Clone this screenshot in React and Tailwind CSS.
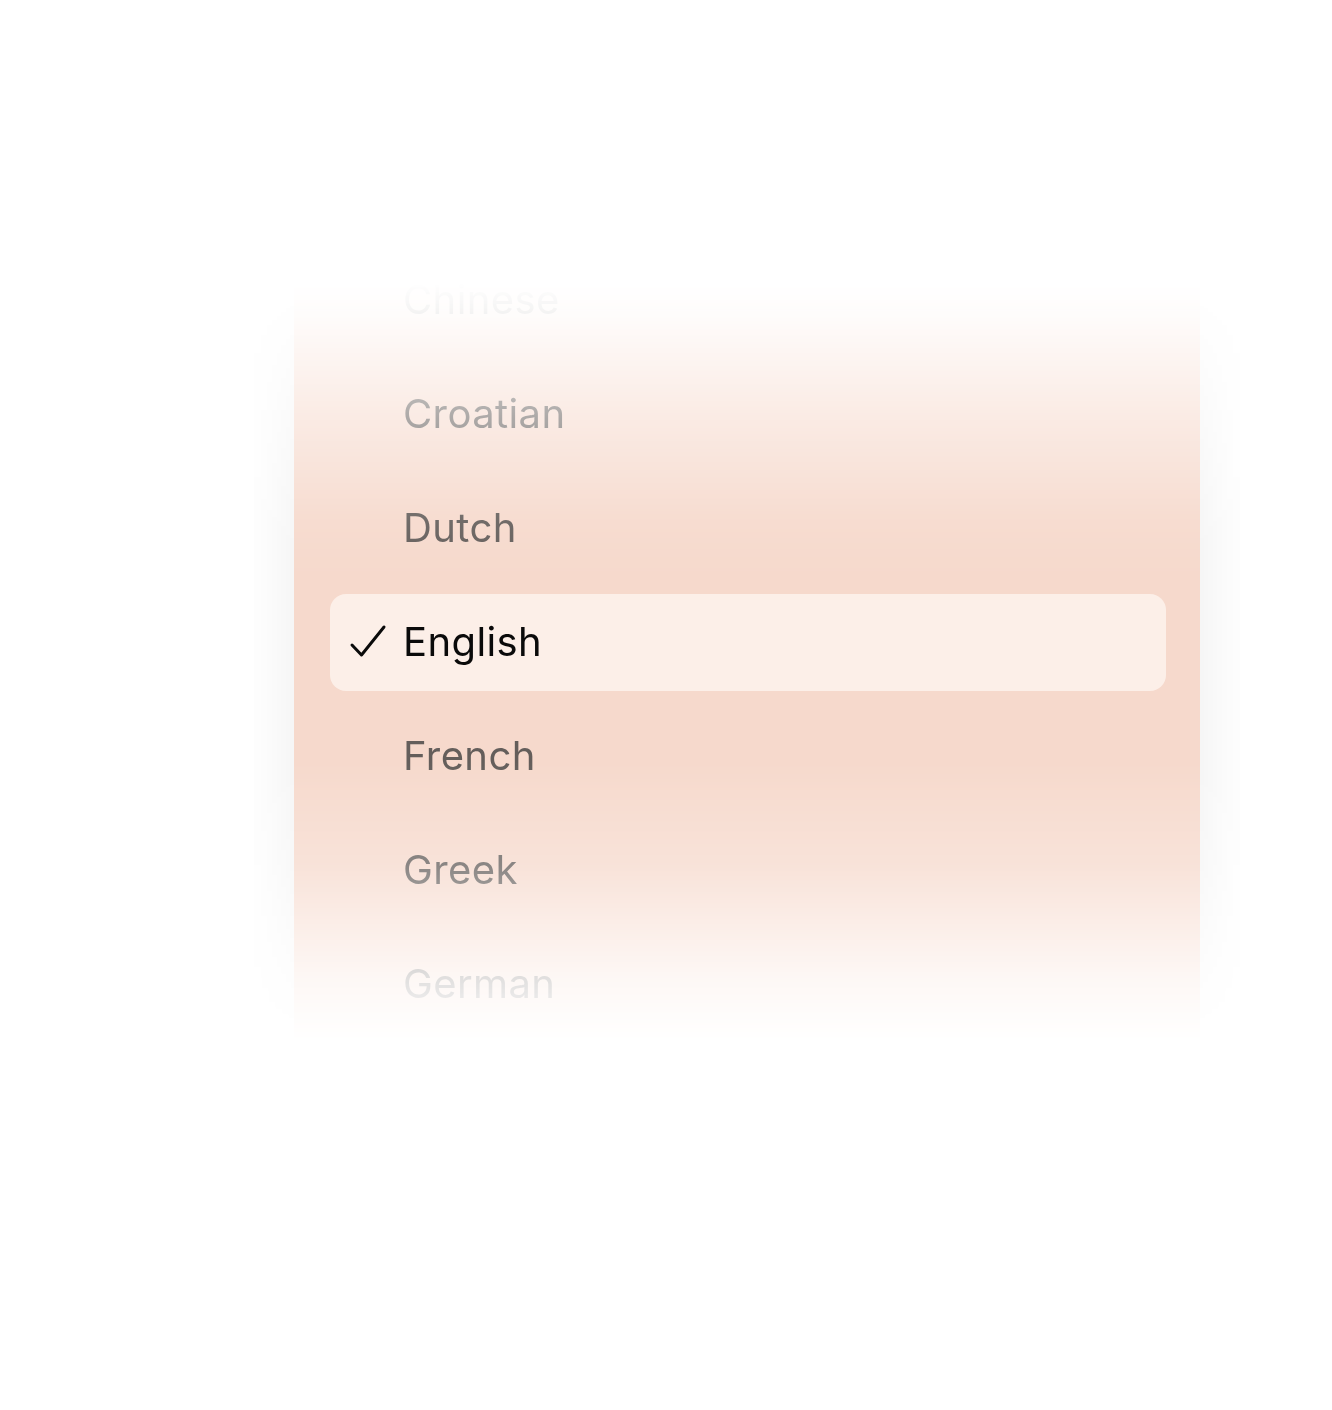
import React from 'react';

const languages = ['Chinese', 'Croatian', 'Dutch', 'English', 'French', 'Greek', 'German'];
const selected = 'English';

function Check() {
  return (
    <svg width="40" height="40" viewBox="0 0 40 40" fill="none" className="shrink-0">
      <path d="M4 23L13.5 33L36 5" stroke="#0a0a0a" strokeWidth="3" strokeLinecap="round" strokeLinejoin="round" />
    </svg>
  );
}

function LanguageRow({ name }) {
  const isSelected = name === selected;
  return (
    <li className="h-[114px] flex items-center">
      {isSelected ? (
        <div className="w-full h-[97px] rounded-2xl bg-[#fcefe8] flex items-center pl-[18px] gap-[15px]">
          <Check />
          <span className="text-[40px] leading-none text-[#0a0a0a] tracking-[0.01em]">{name}</span>
        </div>
      ) : (
        <span className="pl-[73px] text-[40px] leading-none text-[#645e5b] tracking-[0.01em]">{name}</span>
      )}
    </li>
  );
}

export default function App() {
  return (
    <div className="w-[1332px] h-[1410px] bg-white overflow-hidden font-['Inter','Liberation_Sans',sans-serif]">
      {/* picker column, faded top and bottom */}
      <div className="ml-[254px] mt-[243px] w-[986px] px-[40px] [mask-image:linear-gradient(to_bottom,transparent_0%,transparent_5%,rgba(0,0,0,0.08)_9%,rgba(0,0,0,0.5)_21%,rgba(0,0,0,0.92)_35%,black_42%,black_65%,rgba(0,0,0,0.75)_78%,rgba(0,0,0,0.2)_92%,transparent_100%)]">
        <div className="bg-[#f6d9cc] shadow-[0_0_60px_rgba(0,0,0,0.08)] pl-[36px] pr-[34px]">
          <ul>
            {languages.map((name) => (
              <LanguageRow key={name} name={name} />
            ))}
          </ul>
        </div>
      </div>
    </div>
  );
}
